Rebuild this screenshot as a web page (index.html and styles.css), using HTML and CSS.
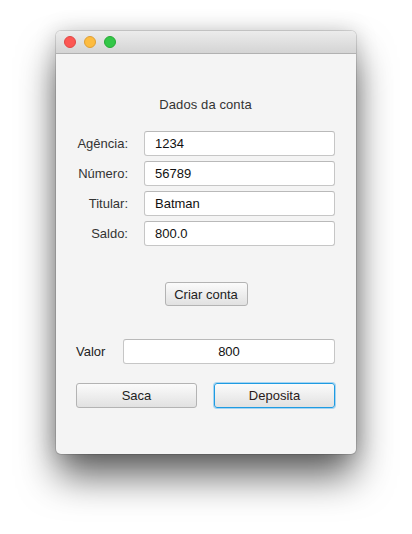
FILE: index.html
```html
<!DOCTYPE html>
<html lang="pt">
<head>
<meta charset="utf-8">
<title>Dados da conta</title>
<link rel="stylesheet" href="styles.css">
</head>
<body>
<div class="stage">
<div class="window">
  <div class="titlebar">
    <span class="light red"></span>
    <span class="light yellow"></span>
    <span class="light green"></span>
  </div>
  <div class="content">
    <div class="heading">Dados da conta</div>
    <div class="form">
      <label class="lbl">Agência:</label>
      <div class="field">1234</div>
      <label class="lbl">Número:</label>
      <div class="field">56789</div>
      <label class="lbl">Titular:</label>
      <div class="field">Batman</div>
      <label class="lbl">Saldo:</label>
      <div class="field">800.0</div>
    </div>
    <div class="create-row">
      <button class="btn create">Criar conta</button>
    </div>
    <div class="valor-row">
      <span class="valor-lbl">Valor</span>
      <div class="field center">800</div>
    </div>
    <div class="actions">
      <button class="btn wide">Saca</button>
      <button class="btn wide focus">Deposita</button>
    </div>
  </div>
</div>
</div>
</body>
</html>
```
FILE: styles.css
```css
html, body {
  margin: 0;
  padding: 0;
  background: #ffffff;
}
body {
  font-family: "Liberation Sans", Arial, sans-serif;
  font-size: 13px;
  color: #2a2a2a;
}
.stage {
  height: 534px;
  padding: 31px 0 0 56px;
  box-sizing: border-box;
  overflow: hidden;
}
.window {
  width: 300px;
  height: 423px;
  border-radius: 5px;
  background: #f4f4f4;
  box-shadow: 0 24px 38px -2px rgba(0, 0, 0, 0.62), 0 0 22px rgba(0, 0, 0, 0.18), 0 0 0 1px rgba(0, 0, 0, 0.12);
  overflow: hidden;
  display: flex;
  flex-direction: column;
}
.titlebar {
  height: 22px;
  flex: none;
  background: linear-gradient(#ececec, #d4d4d4);
  border-bottom: 1px solid #b1b1b1;
  display: flex;
  align-items: center;
  gap: 8px;
  padding-left: 8px;
}
.light {
  width: 12px;
  height: 12px;
  border-radius: 50%;
  box-sizing: border-box;
}
.red { background: #fc5753; border: 1px solid #df4744; }
.yellow { background: #fdbc40; border: 1px solid #de9f34; }
.green { background: #33c748; border: 1px solid #27aa35; }
.content {
  flex: 1;
  padding: 43px 21px 0 20px;
  display: flex;
  flex-direction: column;
}
.heading {
  text-align: center;
  line-height: 16px;
  color: #333;
  letter-spacing: 0.1px;
}
.form {
  margin-top: 18px;
  display: grid;
  grid-template-columns: 52px 1fr;
  column-gap: 16px;
  row-gap: 5px;
  align-items: center;
}
.lbl {
  text-align: right;
  color: #333;
  white-space: nowrap;
}
.field {
  height: 25px;
  box-sizing: border-box;
  background: #ffffff;
  border: 1px solid #c6c6c6;
  border-top-color: #b9b9b9;
  border-radius: 3px;
  padding: 0 10px;
  display: flex;
  align-items: center;
  color: #111;
}
.field.center {
  justify-content: center;
}
.create-row {
  margin-top: 36px;
  display: flex;
  justify-content: center;
}
.btn {
  font-family: inherit;
  font-size: 13px;
  color: #222;
  height: 24px;
  box-sizing: border-box;
  background: linear-gradient(#fbfbfb, #e1e1e1);
  border: 1px solid #b3b3b3;
  border-radius: 3px;
  padding: 0 8px;
  margin: 0;
}
.create {
  width: 83px;
  margin-left: 1px;
}
.valor-row {
  margin-top: 33px;
  display: grid;
  grid-template-columns: 47px 1fr;
  align-items: center;
}
.valor-lbl {
  color: #222;
}
.actions {
  margin-top: 19px;
  display: grid;
  grid-template-columns: 121px 121px;
  justify-content: space-between;
}
.wide {
  height: 25px;
}
.focus {
  border: 1px solid #1e9be2;
  box-shadow: 0 0 0 1px #a6d4f1;
  color: #2a1a1a;
}
```
